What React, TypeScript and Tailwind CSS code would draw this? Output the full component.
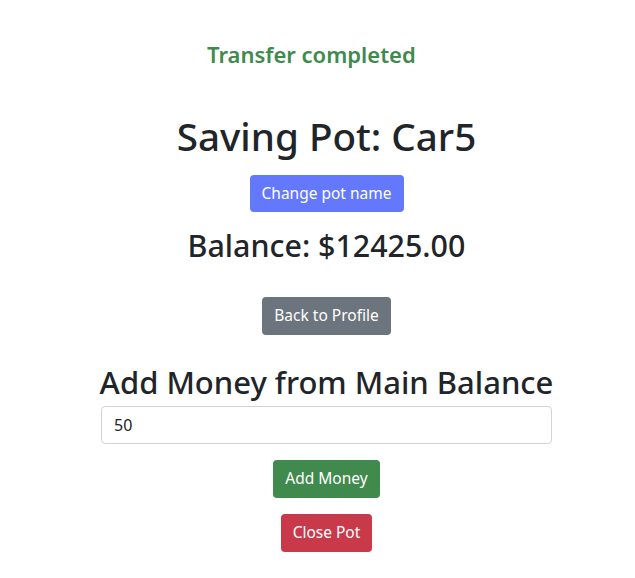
import { useState } from 'react';

const font = { fontFamily: '"Segoe UI", "Noto Sans", "Open Sans", sans-serif' };

export default function App() {
    const [amount, setAmount] = useState('50');

    return (
        <div className="min-h-[578px] w-[635px] bg-white text-[#212529]" style={font}>
            {/* Flash message */}
            <div className="pt-[39px] pl-[207px]">
                <p className="text-[22px] leading-[30px] font-semibold text-[#3f8a4c]">Transfer completed</p>
            </div>

            <div className="ml-[101px] w-[451px] flex flex-col items-center">
                <h1 className="mt-[43px] text-[38.6px] leading-[48px] font-medium whitespace-nowrap">Saving Pot: Car5</h1>
                <button className="mt-[15px] h-[37px] px-3 rounded-[4px] bg-[#6478fe] text-white text-[15.5px]">
                    Change pot name
                </button>

                <h2 className="mt-[15px] text-[30.4px] leading-[38px] font-medium whitespace-nowrap">Balance: $12425.00</h2>

                <button className="mt-[32px] h-[38px] px-3 rounded-[4px] bg-[#6c757d] text-white text-[15.5px]">
                    Back to Profile
                </button>

                <h2 className="mt-[28px] text-[31px] leading-[38px] font-medium whitespace-nowrap">Add Money from Main Balance</h2>
                <input
                    value={amount}
                    onChange={(e) => setAmount(e.target.value)}
                    className="mt-[5px] w-full h-[38px] px-3 rounded-[4px] border border-[#ced4da] text-[16px] text-[#212529] outline-none"
                />

                <button className="mt-[16px] h-[38px] px-3 rounded-[4px] bg-[#3f8a4c] text-white text-[15.5px]">
                    Add Money
                </button>
                <button className="mt-[16px] h-[38px] px-3 rounded-[4px] bg-[#c83a4a] text-white text-[15.5px]">
                    Close Pot
                </button>
            </div>
        </div>
    );
}
